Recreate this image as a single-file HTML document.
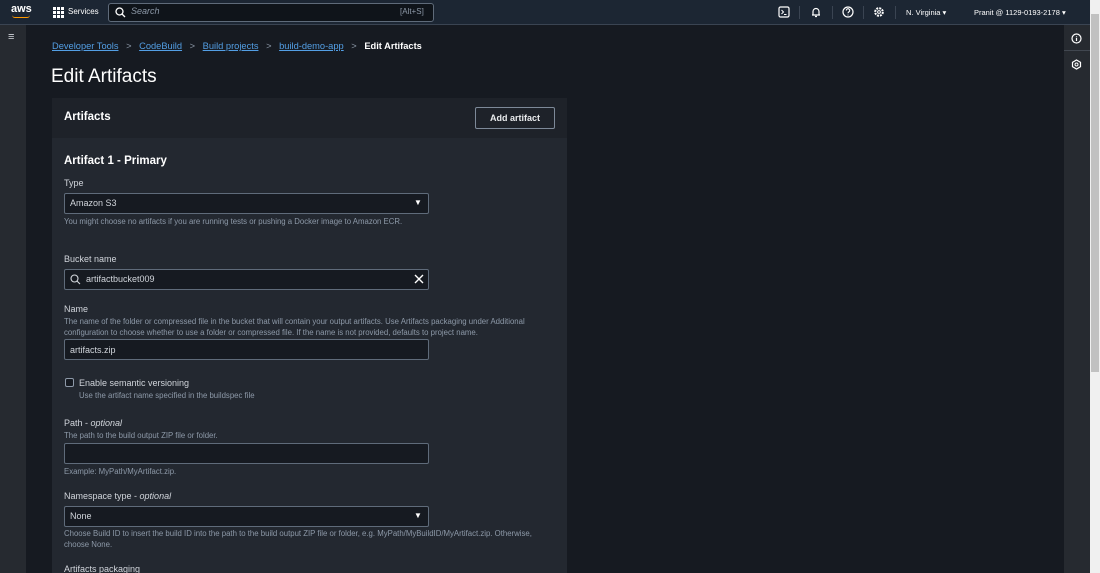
<!DOCTYPE html>
<html><head><meta charset="utf-8"><style>
*{box-sizing:border-box;margin:0;padding:0}
html{width:1100px;height:573px;overflow:hidden}
body{width:1100px;height:573px;overflow:hidden;background:#161a21;font-family:"Liberation Sans",sans-serif;color:#d1d5db;position:relative}
.nav{position:absolute;left:0;top:0;width:1090px;height:25px;background:#1c2633;border-bottom:1px solid #3a4452}
.side{position:absolute;left:0;top:25px;width:26px;height:548px;background:#262a30}
.rside{position:absolute;left:1064px;top:25px;width:26px;height:548px;background:#262a30}
.sb{position:absolute;left:1090px;top:0;width:10px;height:573px;background:#f0f0f0}
.thumb{position:absolute;left:1091px;top:14px;width:8px;height:358px;background:#c1c1c1}
.t{position:absolute;white-space:nowrap}
.card{position:absolute;left:52px;top:98px;width:515px;height:475px;background:#232830}
.ch{position:absolute;left:52px;top:98px;width:515px;height:40px;background:#1e2229}
.inp{position:absolute;left:64px;width:365px;height:21px;background:#161a21;border:1px solid #5f6b7a;border-radius:2px}
.lbl{font-size:9px;color:#d1d5db}
.hint{font-size:7.8px;color:#8d99a8}
a{color:#539fe5;text-decoration:underline}
.sep{position:absolute;top:6px;width:1px;height:13px;background:#3a4452}
</style></head><body>
<div class="nav"></div>
<div class="t" style="left:11px;top:3px;font-size:11px;color:#fff;font-weight:bold">aws</div>
<div style="position:absolute;left:12px;top:15px;width:18px;height:3px;border-bottom:1px solid #ff9900;border-radius:0 0 8px 8px"></div>
<svg style="position:absolute;left:53px;top:7px" width="11" height="11"><g fill="#fff"><rect x="0" y="0" width="3" height="3"/><rect x="4" y="0" width="3" height="3"/><rect x="8" y="0" width="3" height="3"/><rect x="0" y="4" width="3" height="3"/><rect x="4" y="4" width="3" height="3"/><rect x="8" y="4" width="3" height="3"/><rect x="0" y="8" width="3" height="3"/><rect x="4" y="8" width="3" height="3"/><rect x="8" y="8" width="3" height="3"/></g></svg>
<div class="t" style="left:68px;top:7px;font-size:8px;color:#fff">Services</div>
<div style="position:absolute;left:108px;top:3px;width:326px;height:19px;background:#0f141a;border:1px solid #5f6b7a;border-radius:3px"></div>
<svg style="position:absolute;left:115px;top:7px" width="11" height="11"><circle cx="4.5" cy="4.5" r="3.5" stroke="#fff" stroke-width="1.3" fill="none"/><path d="M7 7l3 3" stroke="#fff" stroke-width="1.3"/></svg>
<div class="t" style="left:131px;top:6px;font-size:9px;color:#8d99a8;font-style:italic">Search</div>
<div class="t" style="left:400px;top:7px;font-size:8px;color:#8d99a8">[Alt+S]</div>
<svg style="position:absolute;left:778px;top:6px" width="12" height="12"><rect x="1" y="1" width="10" height="10" rx="1.5" stroke="#fff" stroke-width="1.2" fill="none"/><path d="M3.5 4l2 2-2 2M6 8.5h2.5" stroke="#fff" stroke-width="1" fill="none"/></svg>
<div class="sep" style="left:799px"></div>
<svg style="position:absolute;left:810px;top:6px" width="12" height="12"><path d="M2 9h8M3 9V5.5a3 3 0 016 0V9M5 10.5h2" stroke="#fff" stroke-width="1.2" fill="none"/></svg>
<div class="sep" style="left:832px"></div>
<svg style="position:absolute;left:842px;top:6px" width="12" height="12"><circle cx="6" cy="6" r="5" stroke="#fff" stroke-width="1.2" fill="none"/><path d="M4.3 4.5a1.7 1.7 0 113 1c-.8.5-1.3.8-1.3 1.8M6 8.6v.8" stroke="#fff" stroke-width="1.1" fill="none"/></svg>
<div class="sep" style="left:863px"></div>
<svg style="position:absolute;left:873px;top:6px" width="12" height="12"><circle cx="6" cy="6" r="3.8" stroke="#fff" stroke-width="2" stroke-dasharray="2 1" fill="none"/><circle cx="6" cy="6" r="1.4" stroke="#fff" fill="none"/></svg>
<div class="sep" style="left:895px"></div>
<div class="t" style="left:906px;top:8px;font-size:7.5px;color:#fff">N. Virginia ▾</div>
<div class="t" style="left:974px;top:8px;font-size:7.5px;color:#fff">Pranit @ 1129-0193-2178 ▾</div>
<div class="side"></div>
<div class="t" style="left:8px;top:31px;font-size:11px;color:#d1d5db">≡</div>
<div class="rside"></div>
<div style="position:absolute;left:1064px;top:50px;width:26px;height:1px;background:#414750"></div>
<svg style="position:absolute;left:1071px;top:33px" width="11" height="11"><circle cx="5.5" cy="5.5" r="4.5" stroke="#fff" stroke-width="1.2" fill="none"/><path d="M5.5 4.8v3.2M5.5 3v.6" stroke="#fff" stroke-width="1.2"/></svg>
<svg style="position:absolute;left:1071px;top:59px" width="11" height="11"><path d="M5.5 1l4 2.3v4.4l-4 2.3-4-2.3V3.3z" stroke="#fff" stroke-width="1.2" fill="none"/><circle cx="5.5" cy="5.5" r="1.5" stroke="#fff" fill="none"/></svg>
<div class="sb"></div><div class="thumb"></div>
<div class="t" style="left:52px;top:41px;font-size:9.3px"><a>Developer Tools</a> <span style="color:#8d99a8;padding:0 5px">&gt;</span> <a>CodeBuild</a> <span style="color:#8d99a8;padding:0 5px">&gt;</span> <a>Build projects</a> <span style="color:#8d99a8;padding:0 5px">&gt;</span> <a>build-demo-app</a> <span style="color:#8d99a8;padding:0 5px">&gt;</span> <b style="color:#fff">Edit Artifacts</b></div>
<div class="t" style="left:51px;top:66px;font-size:19px;color:#fff">Edit Artifacts</div>
<div class="card"></div><div class="ch"></div>
<div class="t" style="left:64px;top:111px;font-size:11.5px;font-weight:bold;color:#fff">Artifacts</div>
<div style="position:absolute;left:475px;top:107px;width:80px;height:22px;border:1px solid #7d8998;border-radius:2px;font-size:9px;font-weight:bold;color:#e9ebed;text-align:center;line-height:20px">Add artifact</div>
<div class="t" style="left:64px;top:155px;font-size:11.5px;font-weight:bold;color:#fff">Artifact 1 - Primary</div>
<div class="t lbl" style="left:64px;top:178px">Type</div>
<div class="inp" style="top:193px"></div>
<div class="t lbl" style="left:70px;top:198px">Amazon S3</div>
<div class="t" style="left:414px;top:198px;font-size:8px;color:#fff">▼</div>
<div class="t hint" style="left:64px;top:217px">You might choose no artifacts if you are running tests or pushing a Docker image to Amazon ECR.</div>
<div class="t lbl" style="left:64px;top:254px">Bucket name</div>
<div class="inp" style="top:269px"></div>
<svg style="position:absolute;left:70px;top:274px" width="11" height="11"><circle cx="4.5" cy="4.5" r="3.5" stroke="#d1d5db" stroke-width="1.1" fill="none"/><path d="M7 7l3 3" stroke="#d1d5db" stroke-width="1.1"/></svg>
<div class="t lbl" style="left:86px;top:274px">artifactbucket009</div>
<svg style="position:absolute;left:414px;top:274px" width="10" height="10"><path d="M1 1l8 8M9 1l-8 8" stroke="#fff" stroke-width="1.4"/></svg>
<div class="t lbl" style="left:64px;top:304px">Name</div>
<div class="t hint" style="left:64px;top:317px;line-height:10.5px">The name of the folder or compressed file in the bucket that will contain your output artifacts. Use Artifacts packaging under Additional<br>configuration to choose whether to use a folder or compressed file. If the name is not provided, defaults to project name.</div>
<div class="inp" style="top:339px"></div>
<div class="t lbl" style="left:70px;top:345px">artifacts.zip</div>
<div style="position:absolute;left:65px;top:378px;width:9px;height:9px;border:1px solid #8d99a8;border-radius:2px;background:#161a21"></div>
<div class="t lbl" style="left:79px;top:378px">Enable semantic versioning</div>
<div class="t hint" style="left:79px;top:391px">Use the artifact name specified in the buildspec file</div>
<div class="t lbl" style="left:64px;top:418px">Path - <i>optional</i></div>
<div class="t hint" style="left:64px;top:431px">The path to the build output ZIP file or folder.</div>
<div class="inp" style="top:443px"></div>
<div class="t hint" style="left:64px;top:467px">Example: MyPath/MyArtifact.zip.</div>
<div class="t lbl" style="left:64px;top:491px">Namespace type - <i>optional</i></div>
<div class="inp" style="top:506px"></div>
<div class="t lbl" style="left:70px;top:511px">None</div>
<div class="t" style="left:414px;top:511px;font-size:8px;color:#fff">▼</div>
<div class="t hint" style="left:64px;top:529px;line-height:10.5px">Choose Build ID to insert the build ID into the path to the build output ZIP file or folder, e.g. MyPath/MyBuildID/MyArtifact.zip. Otherwise,<br>choose None.</div>
<div class="t lbl" style="left:64px;top:564px">Artifacts packaging</div>
</body></html>
